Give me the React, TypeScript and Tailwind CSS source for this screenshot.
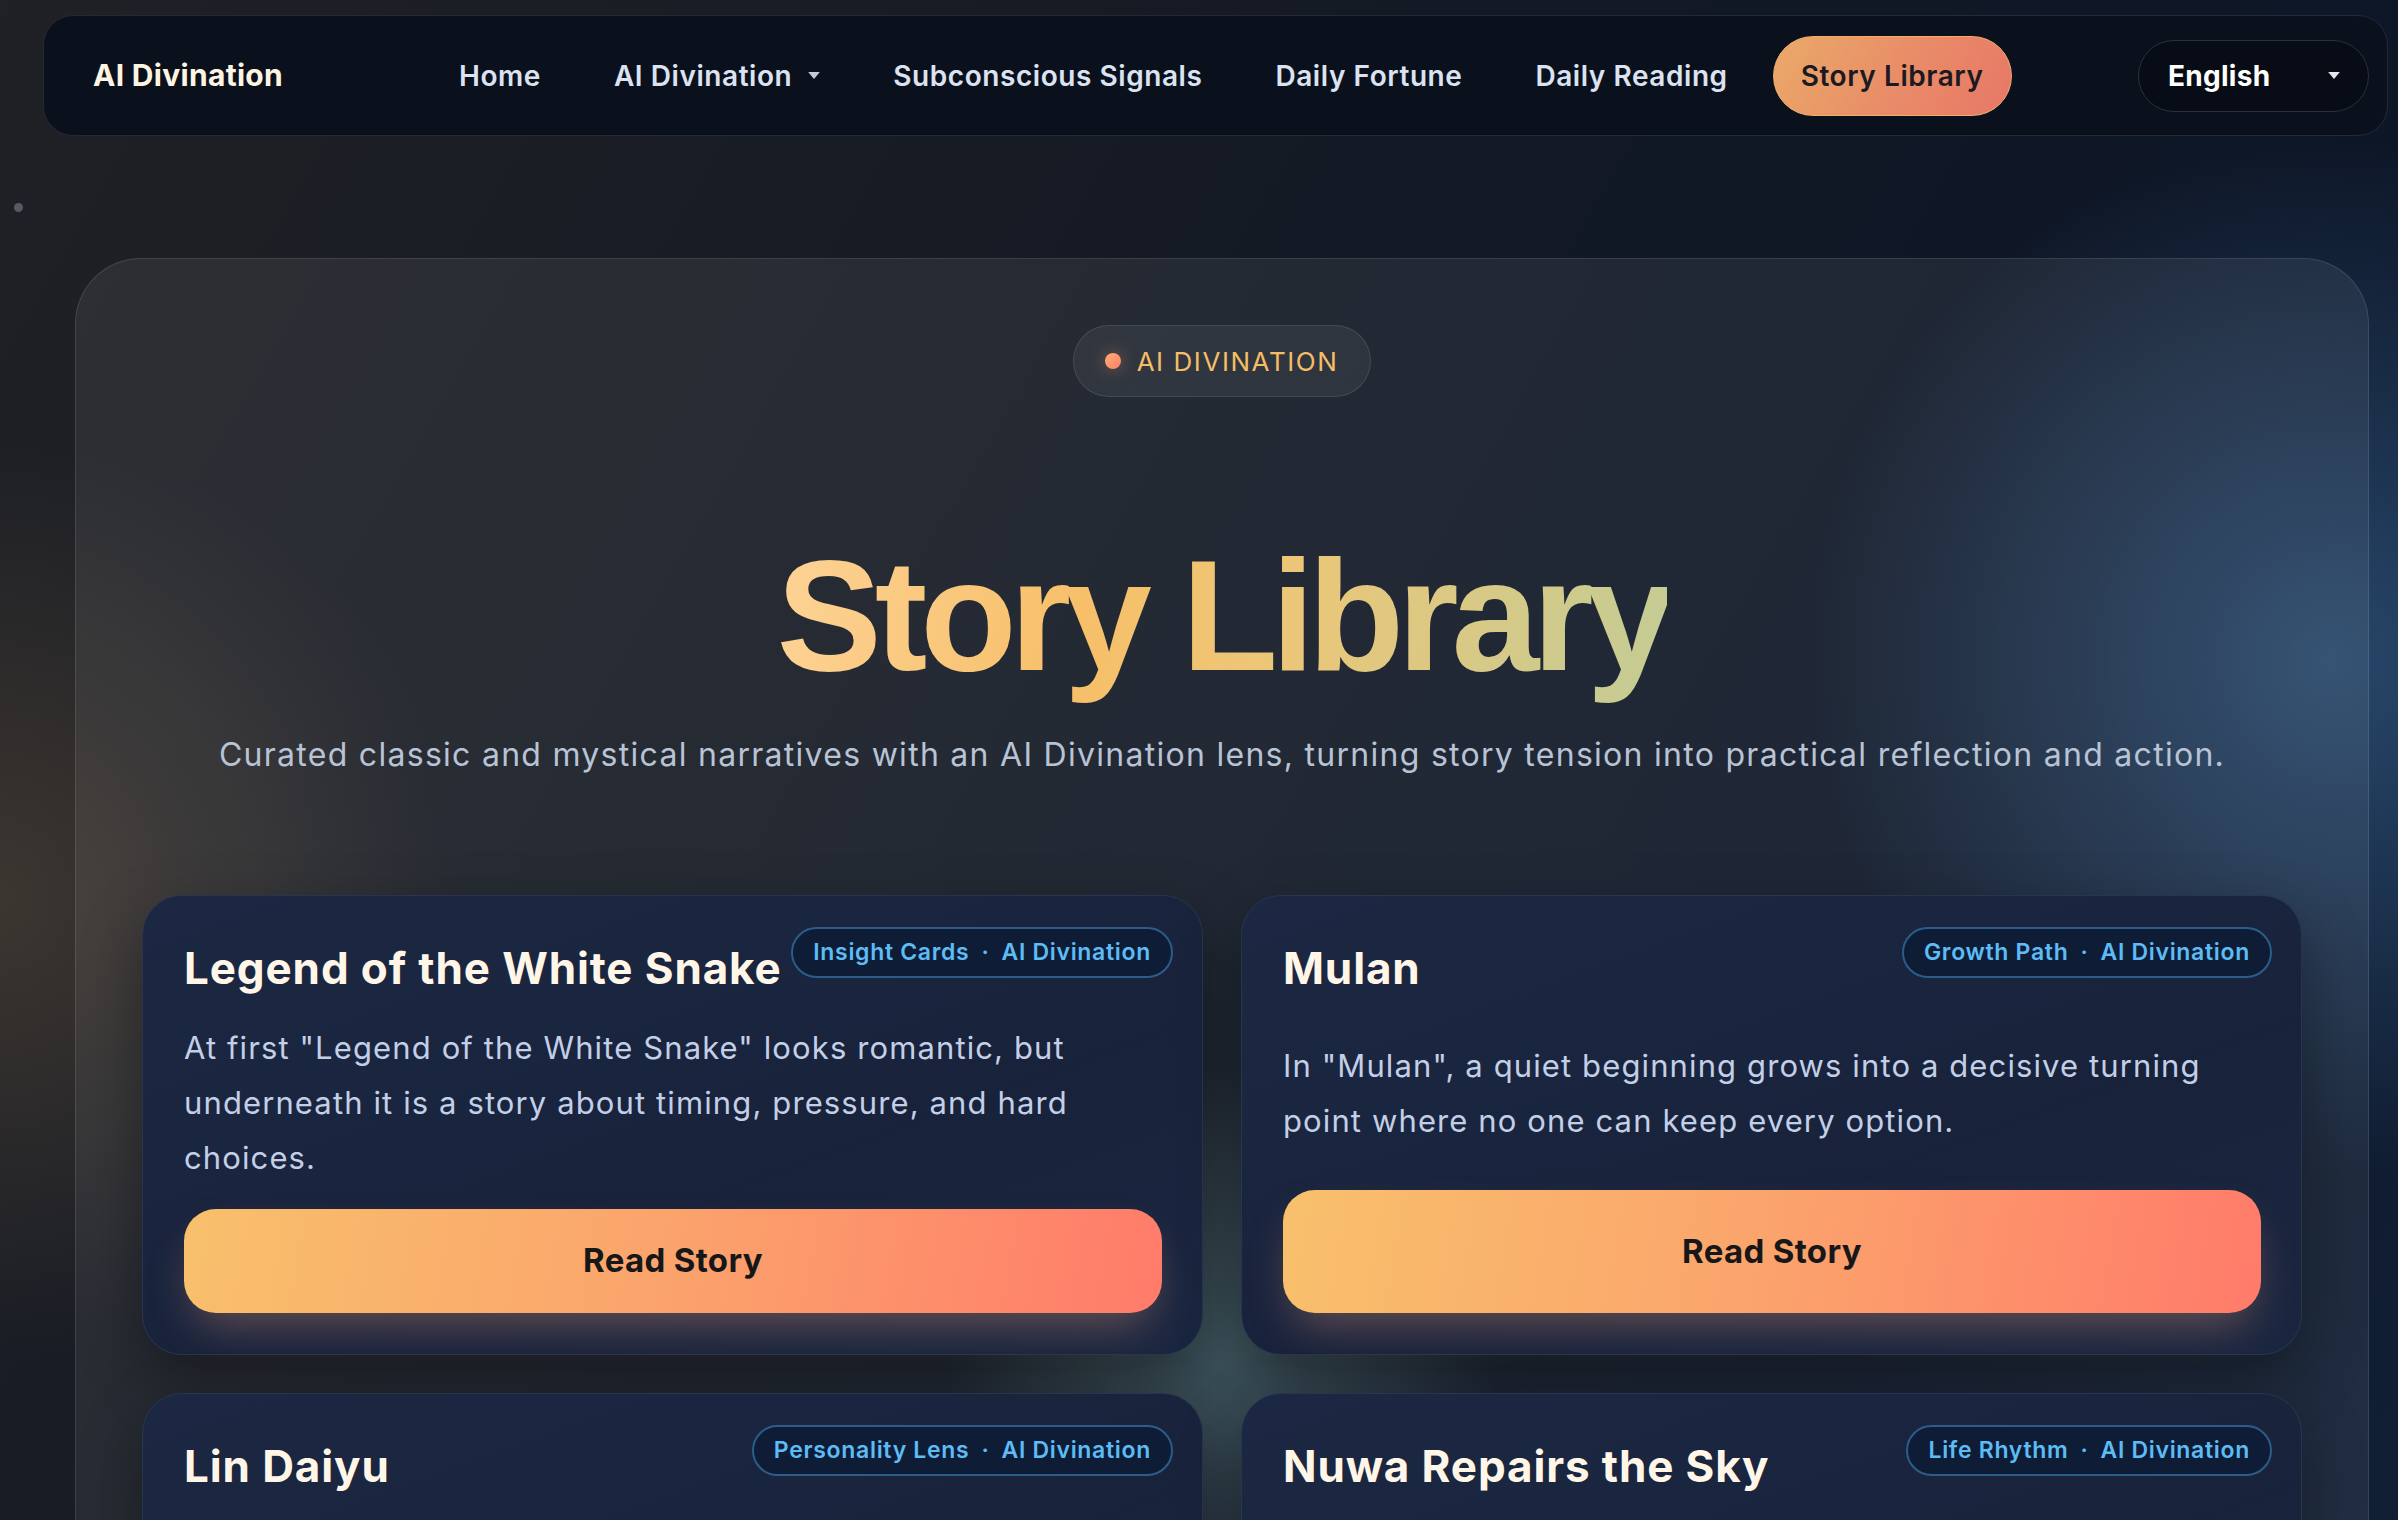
import React from 'react';

const NAV_LINKS = [
  { label: 'Home' },
  { label: 'AI Divination', caret: true },
  { label: 'Subconscious Signals' },
  { label: 'Daily Fortune' },
  { label: 'Daily Reading' },
];

interface Story {
  title: string;
  tag: string;
  description: string;
}

const STORIES: Story[] = [
  {
    title: 'Legend of the White Snake',
    tag: 'Insight Cards',
    description:
      'At first "Legend of the White Snake" looks romantic, but underneath it is a story about timing, pressure, and hard choices.',
  },
  {
    title: 'Mulan',
    tag: 'Growth Path',
    description:
      'In "Mulan", a quiet beginning grows into a decisive turning point where no one can keep every option.',
  },
  {
    title: 'Lin Daiyu',
    tag: 'Personality Lens',
    description:
      'Lin Daiyu reads every small signal deeply, a reminder that sensitivity is a gift when it is paired with boundaries.',
  },
  {
    title: 'Nuwa Repairs the Sky',
    tag: 'Life Rhythm',
    description:
      'When the sky breaks, Nuwa does not wait for perfect material; she repairs what she can with what she has.',
  },
];

const Caret = ({ className }: { className?: string }) => (
  <svg viewBox="0 0 10 6" className={className} fill="currentColor">
    <path d="M0 0h10L5 6z" />
  </svg>
);

const StoryCard = ({ story }: { story: Story }) => {
  return (
    <div className="grid gap-6 rounded-[40px] border-[1.5px] border-[#28354f] bg-[linear-gradient(160deg,#1c2843_0%,#18223b_60%,#1a2640_100%)] pt-[31px] pl-[41px] pr-[40px] pb-[41px] shadow-[0_24px_60px_rgba(0,0,0,0.35)]">
      <div className="flex items-start justify-between pb-[3px]">
        <h3 className="whitespace-nowrap pt-[16px] text-[44px] leading-[50px] font-bold tracking-[0.02em] text-[#fff6e8]">
          {story.title}
        </h3>
        <span className="-mr-[11px] flex h-[51px] shrink-0 items-center rounded-full border-[2px] border-[#2c5d8a] bg-[#0f1c35] px-[20px] text-[23px] font-semibold tracking-[0.03em] text-[#5cbcf6]">
          {story.tag}
          <span className="mx-[12px]">·</span>
          AI Divination
        </span>
      </div>

      <p className="text-[31px] leading-[55px] tracking-[0.036em] text-[#c3cfe6]">
        {story.description}
      </p>

      <button className="flex min-h-[104px] items-center justify-center rounded-[32px] bg-[linear-gradient(100deg,#f8c06c_0%,#fba36c_50%,#ff7b6a_100%)] text-[33px] font-bold tracking-[0.01em] text-[#17171a] shadow-[0_22px_45px_-12px_rgba(255,170,130,0.35)]">
        Read Story
      </button>
    </div>
  );
};

export default function App() {
  return (
    <div className="relative min-h-screen w-full overflow-hidden bg-[radial-gradient(circle_at_2330px_660px,rgba(62,110,160,0.55)_0px,transparent_520px),radial-gradient(circle_at_1222px_1350px,rgba(100,150,150,0.4)_0px,transparent_280px),radial-gradient(circle_at_0px_900px,rgba(110,90,66,0.4)_0px,transparent_460px),linear-gradient(120deg,#202125_0%,#151a24_35%,#0c1628_75%,#13233a_100%)] pb-[80px] font-['Inter','Noto_Sans',sans-serif]">
      <span className="absolute left-[14px] top-[203px] h-[9px] w-[9px] rounded-full bg-[#555a63]" />

      <nav className="ml-[43px] mr-[10px] mt-[15px] flex h-[121px] items-center rounded-[30px] border-[1.5px] border-[#232a36] bg-[#0b111c] pl-[49px] pr-[18px]">
        <div className="w-[338px] text-[30px] font-bold tracking-[0.01em] text-[#fdf5e2]">
          AI Divination
        </div>

        <div className="flex items-center gap-[17px]">
          {NAV_LINKS.map((link, index) => (
            <a
              key={index}
              className="flex h-[80px] items-center gap-[16px] px-[28px] text-[28px] font-semibold tracking-[0.02em] text-[#dbe3f2]"
            >
              {link.label}
              {link.caret && <Caret className="h-[7px] w-[12px] text-[#c3cad8]" />}
            </a>
          ))}
          <a className="flex h-[80px] items-center rounded-full border-[1.5px] border-[#f1ae6b] bg-[linear-gradient(120deg,#eaaa68_0%,#e98b68_55%,#e77767_100%)] px-[27px] text-[28px] font-semibold tracking-[0.02em] text-[#1a1a20]">
            Story Library
          </a>
        </div>

        <div className="ml-auto flex h-[72px] w-[231px] items-center justify-between rounded-full border-[1.5px] border-[#2a313d] bg-[#070c16] pl-[29px] pr-[28px] text-[28px] font-bold tracking-[0.01em] text-white">
          English
          <Caret className="h-[7px] w-[12px] text-[#e5e7eb]" />
        </div>
      </nav>

      <main className="ml-[75px] mr-[29px] mt-[122px] rounded-[66px] border-[1.5px] border-white/10 bg-white/[0.07] px-[66px] pt-[66px] pb-[66px]">
        <div className="flex flex-col items-center">
          <div className="flex h-[72px] items-center gap-[16px] rounded-full border-[1.5px] border-white/10 bg-white/[0.06] pl-[31px] pr-[32px]">
            <span className="h-[16px] w-[16px] rounded-full bg-[linear-gradient(135deg,#ffb072,#ff7e6b)] shadow-[0_0_18px_rgba(255,160,110,0.45)]" />
            <span className="text-[26px] tracking-[0.06em] text-[#f4bd66]">
              AI DIVINATION
            </span>
          </div>

          <h1 className="mt-[124px] text-center">
            <span className="inline-block bg-[linear-gradient(100deg,#fdd396_0%,#f7bf69_35%,#edc677_55%,#c3cc95_100%)] bg-clip-text font-['Liberation_Sans',Arial,sans-serif] text-[158px] leading-[1.2] font-bold tracking-[-0.045em] text-transparent">
              Story Library
            </span>
          </h1>

          <p className="mt-[20px] text-center text-[32px] leading-[48px] tracking-[0.04em] text-[#b8c3d5]">
            Curated classic and mystical narratives with an AI Divination lens,
            turning story tension into practical reflection and action.
          </p>
        </div>

        <div className="mt-[116px] grid grid-cols-2 gap-[38px]">
          {STORIES.map((story, index) => (
            <StoryCard key={index} story={story} />
          ))}
        </div>
      </main>
    </div>
  );
}
